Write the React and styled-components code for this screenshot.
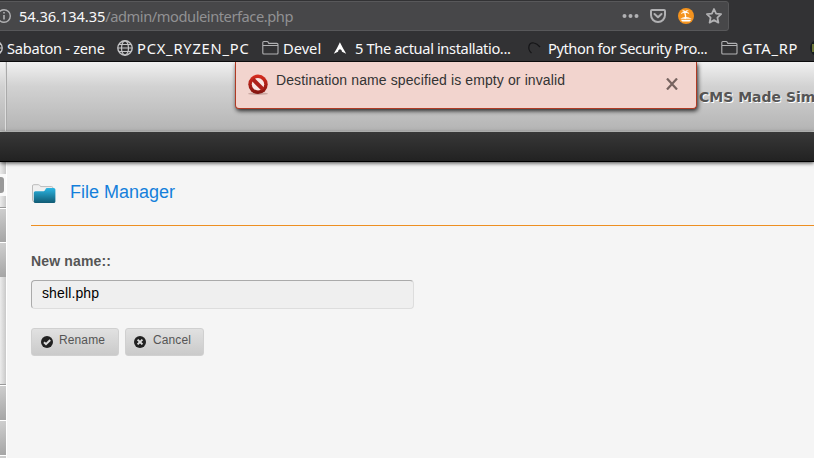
import React from "react";
import styled, { createGlobalStyle } from "styled-components";

const GlobalStyle = createGlobalStyle`
  * { box-sizing: border-box; }
  body { margin: 0; overflow: hidden; background: #f5f5f5; }
  svg { display: block; flex: none; }
`;

const Screen = styled.div`
  position: relative;
  display: flex;
  flex-direction: column;
  width: 814px;
  height: 458px;
  overflow: hidden;
  background: #f5f5f5;
  font-family: "Liberation Sans", Arial, sans-serif;
`;

const BrowserChrome = styled.header`
  display: flex;
  flex-direction: column;
  height: 62px;
  flex: none;
  background: #323234;
  border-bottom: 1px solid #0c0c0d;
  font-family: "Noto Sans", sans-serif;
  white-space: nowrap;
`;

const AddressBar = styled.div`
  display: flex;
  align-items: center;
  width: 730px;
  height: 30px;
  margin: 1px 0 0 -1px;
  padding: 0 5px 0 0;
  background: #474749;
  border: 1px solid #58585a;
  border-radius: 0 3px 3px 0;
`;

const Url = styled.div`
  flex: 1;
  margin-left: 8px;
  font-size: 14.67px;
  line-height: 20px;
  letter-spacing: -0.45px;
  color: #919193;
`;

const UrlHost = styled.span`
  letter-spacing: -0.08px;
  color: #f9f9fa;
`;

const BarIcons = styled.div`
  display: flex;
  align-items: center;
  gap: 10px;
`;

const Bookmarks = styled.nav`
  display: flex;
  align-items: center;
  height: 30px;
  padding-top: 3px;
`;

const Bookmark = styled.span`
  display: flex;
  align-items: center;
  gap: ${(p) => p.$gap || 4}px;
  width: ${(p) => p.$width}px;
  flex: none;
  font-size: 14.67px;
  line-height: 20px;
  letter-spacing: ${(p) => p.$tracking || 0}px;
  color: #f9f9fa;
`;

const SiteHeader = styled.div`
  display: flex;
  align-items: center;
  height: 70px;
  flex: none;
  background: linear-gradient(#f1f1f1, #d2d2d2 35%, #b4b4b4);
  border-bottom: 1px solid #d2d4d2;
`;

const HeaderEdge = styled.div`
  width: 7px;
  height: 100%;
  flex: none;
  border-right: 1px solid #aaa;
  box-shadow: inset -1px 0 #dedede;
`;

const SiteName = styled.div`
  margin-left: 692px;
  padding-top: 1px;
  white-space: nowrap;
  font: bold 14px/20px "DejaVu Sans", sans-serif;
  color: #555;
  text-shadow: 1px 1px 0 #fff;
`;

const DarkBar = styled.div`
  position: relative;
  height: 30px;
  flex: none;
  background: linear-gradient(#383838, #222);
  border-bottom: 1px solid #000;
  box-shadow: 0 1px 4px rgba(0, 0, 0, 0.75);
`;

const Body = styled.div`
  display: flex;
  flex: 1;
  min-height: 0;
`;

const Sidebar = styled.aside`
  display: flex;
  flex-direction: column;
  width: 7px;
  flex: none;
  border-right: 1px solid #fff;
  background: #d8d8d8;
`;

const SideGap = styled.div`
  height: ${(p) => p.$height}px;
  flex: none;
  background: linear-gradient(90deg, #ececec, #c9c9c9);
`;

const ToggleSlot = styled.div`
  display: flex;
  align-items: center;
  height: 22px;
  flex: none;
  background: #fafafa;
`;

const Toggle = styled.div`
  width: 4px;
  height: 16px;
  border-radius: 0 3px 3px 0;
  background: #999;
`;

const SideItem = styled.div`
  height: ${(p) => p.$height}px;
  flex: none;
  border-top: 1px solid ${(p) => (p.$first ? "#999" : "#fff")};
  box-shadow: ${(p) => (p.$first ? "inset 0 1px #fff" : "none")};
  background: linear-gradient(165deg, #cfcfcf, #a5a5a5);
`;

const Content = styled.main`
  display: flex;
  flex-direction: column;
  flex: 1;
  padding-left: 24px;
`;

const TitleRow = styled.div`
  display: flex;
  height: 64px;
  padding-top: 20px;
  border-bottom: 1px solid #ed8f22;
`;

const Title = styled.h1`
  margin: 0 0 0 14px;
  font-size: 18px;
  font-weight: 400;
  line-height: 20px;
  color: #147fdb;
`;

const Label = styled.label`
  margin-top: 26px;
  font-size: 14px;
  font-weight: 700;
  line-height: 18px;
  letter-spacing: 0.15px;
  color: #555;
`;

const NameInput = styled.input`
  width: 383px;
  height: 29px;
  margin: 10px 0 0;
  padding: 0 10px 3px;
  border: 1px solid #ddd;
  border-top-color: #aaa;
  border-left-color: #aaa;
  border-radius: 4px;
  outline: none;
  background: #efefef;
  color: #000;
  font: 14px "Liberation Sans", Arial, sans-serif;
  letter-spacing: 0.12px;
`;

const Actions = styled.div`
  display: flex;
  gap: 6px;
  margin-top: 19px;
`;

const ActionButton = styled.button`
  display: flex;
  align-items: flex-start;
  width: ${(p) => p.$width}px;
  height: 28px;
  padding: 7px 0 0 ${(p) => p.$inset || 9}px;
  border: 1px solid #d0d0d0;
  border-radius: 3px;
  background: linear-gradient(#e1e1e1, #cacaca);
  color: #555;
  font: 12px/12px "Liberation Sans", Arial, sans-serif;
  letter-spacing: 0.12px;
`;

const ActionText = styled.span`
  margin: -2px 0 0 ${(p) => p.$gap || 6}px;
`;

const Toast = styled.div`
  position: absolute;
  top: 62px;
  left: 235px;
  display: flex;
  width: 462px;
  height: 47px;
  padding: 8px 18px 0 12px;
  border: 1px solid #b03a24;
  border-top: 0;
  border-bottom-width: 1.5px;
  border-radius: 0 0 4px 4px;
  background: #f2d4ce;
  box-shadow: 1px 2px 4px rgba(0, 0, 0, 0.8);
  clip-path: inset(0 -8px -8px -8px);
`;

const ToastText = styled.div`
  flex: 1;
  margin-left: 6px;
  font-size: 14px;
  line-height: 20px;
  letter-spacing: 0.11px;
  color: #333;
`;

const ToastClose = styled.div`
  padding-top: 8px;
`;

const InfoIcon = () => (
  <svg width="11" height="16" viewBox="0 0 11 16" fill="none" stroke="#b1b1b3">
    <circle cx="4" cy="8" r="6.3" strokeWidth="1.4" />
    <path d="M4 7v4.5M4 4v1.6" strokeWidth="1.6" />
  </svg>
);

const DotsIcon = () => (
  <svg width="17" height="16" viewBox="0 0 17 16" fill="#b1b1b3">
    <circle cx="2.5" cy="8" r="2" />
    <circle cx="8.5" cy="8" r="2" />
    <circle cx="14.5" cy="8" r="2" />
  </svg>
);

const PocketIcon = () => (
  <svg width="18" height="18" viewBox="0 0 18 18" fill="none" stroke="#b1b1b3" strokeWidth="2" strokeLinecap="round" strokeLinejoin="round">
    <path d="M3 3h12a1 1 0 0 1 1 1v4a7 7 0 0 1-14 0V4a1 1 0 0 1 1-1z" />
    <path d="M5.500 7L9 10.300 12.500 7" />
  </svg>
);

const IslandIcon = () => (
  <svg width="18" height="18" viewBox="0 0 18 18">
    <circle cx="9" cy="9" r="8" fill="#f4931e" />
    <path d="M8 12C9 9.500 8.600 7.500 7.800 6" stroke="#fff" strokeWidth="1.400" fill="none" />
    <path d="M3.800 7.200Q4.500 4.800 7 5 5.800 3.800 4.800 3.900 7 2.600 8.200 4.200 9.800 2.600 12 4q-1.800-.1-2.600 1 2.600-.2 3 2.200-1.600-1.300-4-1.100Q5.800 5.800 3.800 7.200z" fill="#fff" />
    <path d="M3.200 11.800q3-2 5.800-1.800t5.800 1.800z" fill="#fff" />
    <path d="M3.800 12.800h10.600l-1.800 1.600H5.400z" fill="#fff" />
  </svg>
);

const StarIcon = () => (
  <svg width="18" height="18" viewBox="0 0 18 18" fill="none" stroke="#b1b1b3" strokeWidth="1.8" strokeLinejoin="round">
    <path d="M9 2l2.100 4.600 5 .6-3.700 3.400 1 5L9 13.100l-4.400 2.500 1-5L1.900 7.200l5-.6z" />
  </svg>
);

const GlobeIcon = ({ cut }) => (
  <svg width={cut ? 3 : 16} height="16" viewBox={cut ? "13 0 3 16" : "0 0 16 16"} fill="none" stroke="#c4c4c6" strokeWidth="1.2">
    <circle cx="8" cy="8" r="7.200" strokeWidth="1.400" />
    <ellipse cx="8" cy="8" rx="3.500" ry="7.200" />
    <path d="M1 8h14M2 4.500h12M2 11.500h12" />
  </svg>
);

const FolderIcon = () => (
  <svg width="17" height="16" viewBox="0 0 17 16" fill="none" stroke="#b1b1b3" strokeWidth="1.1">
    <path d="M.8 13V2.500q0-1 1-1H5q1 0 1.400 1l.4.900h8q1.200 0 1.200 1.200V13q0 1-1 1H1.800q-1 0-1-1zM1 5.500h15" />
  </svg>
);

const ArchIcon = () => (
  <svg width="14" height="14" viewBox="0 0 14 14" fill="#fff">
    <path d="M6.900 1.200Q9.800 7 13.200 12.800L9 10.800Q8.900 8.300 7 8.200 5.100 8.300 5 10.800L.8 12.800Q4.200 7 6.900 1.200z" />
  </svg>
);

const ArcIcon = () => (
  <svg width="14" height="16" viewBox="0 0 14 16" fill="none" stroke="#151517" strokeWidth="1.2">
    <path d="M4.500 13Q1 10 2 6t5-3q3 .6 6 4" />
  </svg>
);

const BadgeIcon = () => (
  <svg width="16" height="16" viewBox="0 0 16 16">
    <circle cx="8" cy="8" r="8" fill="#171d20" />
    <path d="M3 4v8M5 3v9" stroke="#8a9440" strokeWidth="1.500" />
  </svg>
);

const BlockedIcon = () => (
  <svg width="22" height="25" viewBox="0 0 22 25">
    <defs>
      <linearGradient id="blocked" x1="0" y1="0" x2="0" y2="1">
        <stop stopColor="#d92d20" />
        <stop offset="1" stopColor="#801510" />
      </linearGradient>
    </defs>
    <ellipse cx="10" cy="23.700" rx="10" ry="1.200" fill="#aa827c" opacity=".55" />
    <circle cx="10" cy="14.300" r="9.700" fill="url(#blocked)" />
    <circle cx="10" cy="14.300" r="6.200" fill="#f9e7e4" />
    <path d="M5 9.300l10 10" stroke="#ae211a" strokeWidth="4" />
  </svg>
);

const CloseIcon = () => (
  <svg width="12" height="12" viewBox="0 0 12 12" stroke="#76635f" strokeWidth="2.200" fill="none">
    <path d="M1 .5l10 11M11 .5l-10 11" />
  </svg>
);

const FileManagerIcon = () => (
  <svg width="25" height="24" viewBox="0 0 25 24">
    <defs>
      <linearGradient id="folder" x1="0" y1="0" x2="0" y2="1">
        <stop stopColor="#2bb5e2" />
        <stop offset="1" stopColor="#105a73" />
      </linearGradient>
    </defs>
    <path d="M1.500 18V4q0-1.300 1.300-1.300h4.600q1 0 1.600 1l.6.900h11q1.200 0 1.200 1.200V17L4 20q-2.500 0-2.500-2z" fill="#f0f0f0" stroke="#bbb" />
    <path d="M2.800 10.700q0-1.500 1.500-1.500h8.400q1 0 1.400-1.100l.5-1q.4-1 1.400-1h6.700q1.700 0 1.700 1.500v12q0 1.500-1.700 1.500H4.500q-1.700 0-1.700-1.500z" fill="url(#folder)" />
  </svg>
);

const StatusIcon = ({ path }) => (
  <svg width="12" height="12" viewBox="0 0 12 12">
    <circle cx="6" cy="6" r="6" fill="#222" />
    <path d={path} stroke="#ddd" strokeWidth="2" fill="none" />
  </svg>
);

export default function App() {
  return (
    <Screen>
      <GlobalStyle />
      <BrowserChrome>
        <AddressBar>
          <InfoIcon />
          <Url><UrlHost>54.36.134.35</UrlHost>/admin/moduleinterface.php</Url>
          <BarIcons>
            <DotsIcon />
            <PocketIcon />
            <IslandIcon />
            <StarIcon />
          </BarIcons>
        </AddressBar>
        <Bookmarks>
          <Bookmark $width={117} $tracking={-0.28}><GlobeIcon cut />Sabaton - zene</Bookmark>
          <Bookmark $width={145} $tracking={0.8}><GlobeIcon />PCX_RYZEN_PC</Bookmark>
          <Bookmark $width={71}><FolderIcon />Devel</Bookmark>
          <Bookmark $width={194} $gap={8} $tracking={-0.38}><ArchIcon />5 The actual installatio...</Bookmark>
          <Bookmark $width={194} $gap={7} $tracking={-0.42}><ArcIcon />Python for Security Pro...</Bookmark>
          <Bookmark $width={89} $tracking={0.75}><FolderIcon />GTA_RP</Bookmark>
          <Bookmark $width={16}><BadgeIcon /></Bookmark>
        </Bookmarks>
      </BrowserChrome>
      <SiteHeader>
        <HeaderEdge />
        <SiteName>CMS Made Sim</SiteName>
      </SiteHeader>
      <DarkBar />
      <Body>
        <Sidebar>
          <SideGap $height={12} />
          <ToggleSlot><Toggle /></ToggleSlot>
          <SideGap $height={11} />
          <SideItem $height={35} $first />
          <SideItem $height={35} />
          <SideGap $height={107} />
          <SideItem $height={36} $first />
          <SideItem $height={35} />
          <SideItem $height={35} />
        </Sidebar>
        <Content>
          <TitleRow>
            <FileManagerIcon />
            <Title>File Manager</Title>
          </TitleRow>
          <Label htmlFor="newname">New name::</Label>
          <NameInput id="newname" defaultValue="shell.php" />
          <Actions>
            <ActionButton $width={88}>
              <StatusIcon path="M3 6.200l2 2L9.200 4" />
              <ActionText>Rename</ActionText>
            </ActionButton>
            <ActionButton $width={79} $inset={8}>
              <StatusIcon path="M3.600 3.600l4.800 4.800M8.400 3.600L3.600 8.400" />
              <ActionText $gap={7}>Cancel</ActionText>
            </ActionButton>
          </Actions>
        </Content>
      </Body>
      <Toast>
        <BlockedIcon />
        <ToastText>Destination name specified is empty or invalid</ToastText>
        <ToastClose><CloseIcon /></ToastClose>
      </Toast>
    </Screen>
  );
}
